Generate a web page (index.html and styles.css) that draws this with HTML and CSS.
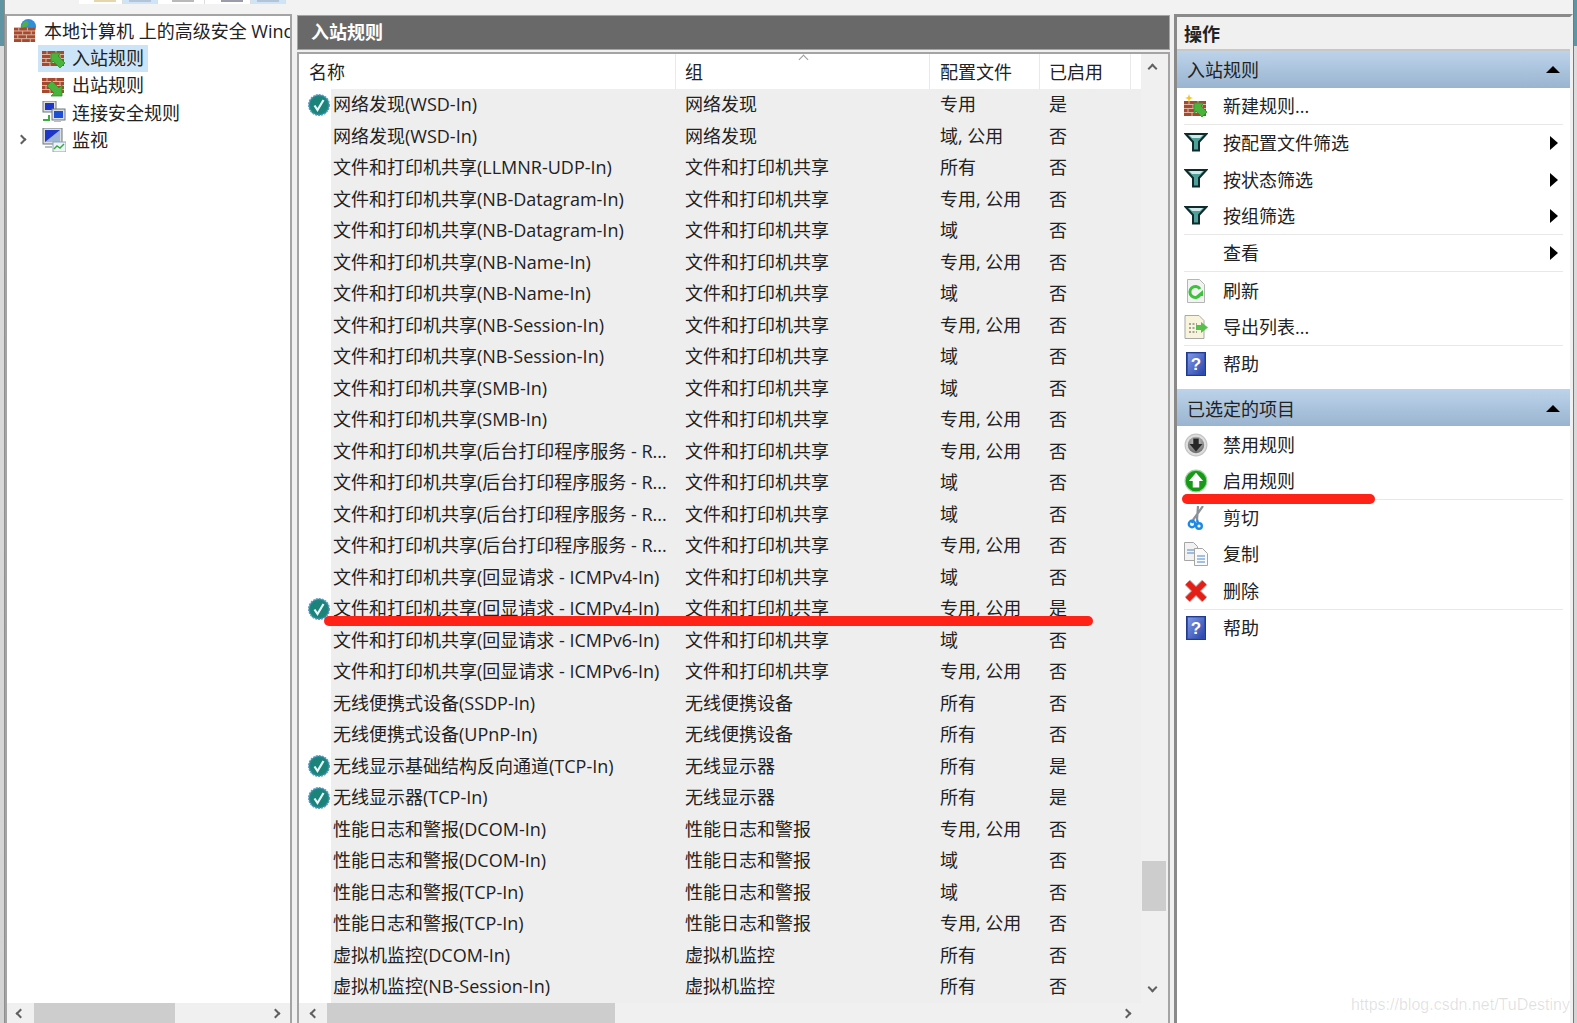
FILE: index.html
```html
<!DOCTYPE html>
<html lang="zh-CN">
<head>
<meta charset="utf-8">
<title>高级安全 Windows 防火墙</title>
<link rel="stylesheet" href="styles.css">
</head>
<body>
<svg class="sprite" xmlns="http://www.w3.org/2000/svg">
  <defs>
    <linearGradient id="g-help" x1="0" y1="0" x2="1" y2="1"><stop offset="0" stop-color="#7f98e6"/><stop offset="1" stop-color="#2b45a8"/></linearGradient>
    <radialGradient id="g-dis" cx=".5" cy=".3" r=".8"><stop offset="0" stop-color="#c9c9c9"/><stop offset="1" stop-color="#5d5d5d"/></radialGradient>
    <g id="bricks">
      <rect x="0" y="5" width="22" height="15" fill="#a8492f"/>
      <path d="M0 8.500h22M0 12.500h22M0 16.500h22M5 5v3.500M14 5v3.500M9 8.500v4M18 8.500v4M4 12.500v4M13 12.500v4M8 16.500v3.500M17 16.500v3.500" stroke="#d9b7a5" stroke-width="1" fill="none"/>
    </g>
    <symbol id="i-check" viewBox="0 0 22 22">
      <circle cx="11" cy="11" r="10.300" fill="#1f8a88" stroke="#5f97c7" stroke-width="1.400" stroke-dasharray="2 1"/>
      <circle cx="11" cy="11" r="8.500" fill="#1b8378"/>
      <path d="M6.500 11.500l3 4.500 6-10" stroke="#e9f8ff" stroke-width="2.200" fill="none"/>
    </symbol>
    <symbol id="i-in" viewBox="0 0 24 24">
      <use href="#bricks"/>
      <path d="M9 7h10l-3 3 7 7-5 5-7-7-2 3z" fill="#49b43c" stroke="#2d8f2a" stroke-width=".8"/>
    </symbol>
    <symbol id="i-out" viewBox="0 0 24 24">
      <use href="#bricks"/>
      <path d="M10 8l7 7 3-3v11H9l3-3-7-7z" fill="#49b43c" stroke="#2d8f2a" stroke-width=".8"/>
    </symbol>
    <symbol id="i-new" viewBox="0 0 24 24">
      <use href="#bricks" transform="translate(0 2)"/>
      <path d="M10 9h10l-3 3 6 6-5 5-6-6-2 3z" fill="#49b43c" stroke="#2d8f2a" stroke-width=".8"/>
      <path d="M5 0l1 3 3 1-3 1-1 3-1-3-3-1 3-1z" fill="#f6c61e"/>
    </symbol>
    <symbol id="i-root" viewBox="0 0 24 24">
      <circle cx="15" cy="8" r="8" fill="#2f8fd8"/>
      <path d="M10 3c3-2 6 0 5 3s-5 1-5 4-3 0-2-3zM18 8c2 0 3 2 2 4s-3 1-3-1z" fill="#56ad46"/>
      <g transform="translate(0 4)"><use href="#bricks"/></g>
    </symbol>
    <symbol id="i-sec" viewBox="0 0 24 24">
      <rect x="1" y="0" width="13" height="11" fill="#ddd" stroke="#6d7680"/><rect x="3" y="2" width="9" height="7" fill="#1d35c8"/>
      <rect x="10" y="8" width="13" height="11" fill="#ddd" stroke="#6d7680"/><rect x="12" y="10" width="9" height="7" fill="#1d4ed8"/>
      <path d="M12 19h7v2h-7z" fill="#b9bec4"/><path d="M1 18h5v-4h2v6H1z" fill="#3cae3c"/>
    </symbol>
    <symbol id="i-mon" viewBox="0 0 24 24">
      <rect x="1" y="0" width="19" height="16" fill="#dcdcdc" stroke="#6d7680"/><rect x="3" y="2" width="15" height="12" fill="#1d35c8"/><path d="M3 14l15-12v12z" fill="#9fb7d6"/>
      <rect x="11" y="14" width="13" height="10" fill="#eef3f9" stroke="#8aa1bd"/><path d="M12 21l3-3 3 2 4-4" stroke="#36a83c" stroke-width="1.400" fill="none"/>
      <path d="M3 18h7v2H3z" fill="#b9bec4"/>
    </symbol>
    <symbol id="i-filter" viewBox="0 0 24 20">
      <path d="M1.500 2h21l-7.500 8v8.500H9V10z" fill="#4f9f9b" stroke="#0f2b2b" stroke-width="2"/>
      <path d="M5 3h14l-3 3H8z" fill="#cfe8e8"/>
    </symbol>
    <symbol id="i-refresh" viewBox="0 0 24 24">
      <path d="M3.500 .5h12l5 5v18h-17z" fill="#f3f3f3" stroke="#b5b5b5"/>
      <path d="M16 16a5.500 5.500 0 1 1 0-6" stroke="#3dc23d" stroke-width="3" fill="none"/>
      <path d="M12 17h7v-6z" fill="#3dc23d"/>
    </symbol>
    <symbol id="i-export" viewBox="0 0 24 24">
      <path d="M1 .5h14l5 5v18H1z" fill="#f8f4dc" stroke="#a9a9a9"/>
      <path d="M5 9h8M5 13h6M5 17h8" stroke="#555" stroke-dasharray="2 1.500"/>
      <path d="M12 10h5v-3l7 5.500-7 5.500v-3h-5z" fill="#55c04a"/>
    </symbol>
    <symbol id="i-help" viewBox="0 0 24 24">
      <rect x="2.500" y=".5" width="19" height="23" fill="#2f4fb5" stroke="#1f3a8f"/>
      <rect x="4" y="1.500" width="16" height="21" fill="url(#g-help)"/>
      <text x="12" y="18" class="help-q" text-anchor="middle">?</text>
    </symbol>
    <symbol id="i-dis" viewBox="0 0 22 22">
      <circle cx="11" cy="11" r="10" fill="#dedede" stroke="#c4c4c4"/>
      <circle cx="11" cy="11" r="7.500" fill="url(#g-dis)"/>
      <path d="M8.500 5h5v5h3.500L11 17 5 10h3.500z" fill="#262626"/>
    </symbol>
    <symbol id="i-en" viewBox="0 0 22 22">
      <circle cx="11" cy="11" r="10" fill="#189a18" stroke="#9ad49a"/>
      <path d="M11 3.500l6.500 7.500H14v6H8v-6H4.500z" fill="#fff"/>
    </symbol>
    <symbol id="i-cut" viewBox="0 0 24 24">
      <path d="M19 0L9 14M14 0l-1 14" stroke="#8b9099" stroke-width="2.200" fill="none"/>
      <path d="M9 14l-1 3M13 14l1 3" stroke="#1e88e5" stroke-width="2.400" fill="none"/>
      <circle cx="8" cy="18" r="3.200" fill="none" stroke="#1e88e5" stroke-width="2.400"/>
      <circle cx="15" cy="20" r="2.800" fill="none" stroke="#1e88e5" stroke-width="2.400"/>
    </symbol>
    <symbol id="i-copy" viewBox="0 0 24 24">
      <path d="M.5 .5h9l4 4v14H.5z" fill="#f2f2f2" stroke="#a5a5a5"/>
      <path d="M3 8h7M3 11h7" stroke="#4d86c6"/>
      <path d="M10.500 6.500h8l5 5v12h-13z" fill="#fafafa" stroke="#a5a5a5"/>
      <path d="M13 14h8M13 17h8M13 20h8" stroke="#4d86c6"/>
    </symbol>
    <symbol id="i-del" viewBox="0 0 24 24">
      <path d="M3.500 3.500L20.500 20.500M20.500 3.500L3.500 20.500" stroke="#c9b3b0" stroke-width="7.500" fill="none"/>
      <path d="M3.500 3.500L20.500 20.500M20.500 3.500L3.500 20.500" stroke="#e41f18" stroke-width="5.800" fill="none"/>
    </symbol>
  </defs>
</svg>

<div class="screen">
  <div class="toolbar">
    <span class="tb tb-a"><i class="tb-chip chip-tan"></i></span>
    <span class="tb tb-b"><i class="tb-chip chip-blue"></i></span>
    <span class="tb tb-c"><i class="tb-chip chip-grey"></i></span>
    <span class="tb tb-d"><i class="tb-chip chip-slate"></i></span>
    <span class="tb tb-b"><i class="tb-chip chip-blue"></i></span>
  </div>

  <div class="main">
    <div class="desk desk-left"></div>

    <section class="tree">
      <div class="tree-body">
        <div class="node node-root"><svg class="ico-tree-root"><use href="#i-root"/></svg><span class="node-label">本地计算机 上的高级安全 Wind</span></div>
        <div class="node node-child"><span class="node-sel"><svg class="ico-tree"><use href="#i-in"/></svg><span>入站规则</span></span></div>
        <div class="node node-child"><span class="node-plain"><svg class="ico-tree"><use href="#i-out"/></svg><span>出站规则</span></span></div>
        <div class="node node-child"><span class="node-plain"><svg class="ico-tree"><use href="#i-sec"/></svg><span>连接安全规则</span></span></div>
        <div class="node node-child node-exp"><span class="chev chev-r"></span><span class="node-plain"><svg class="ico-tree"><use href="#i-mon"/></svg><span>监视</span></span></div>
      </div>
      <div class="hscroll tree-hs"><span class="chev chev-l"></span><span class="thumb tree-thumb"></span><span class="chev chev-r"></span></div>
    </section>

    <section class="center">
      <div class="center-title">入站规则</div>
      <div class="panel">
        <div class="panel-body">
          <div class="list">
            <div class="list-head">
              <div class="hcell hname">名称</div>
              <div class="hcell hgroup">组<span class="sortmark"></span></div>
              <div class="hcell hprofile">配置文件</div>
              <div class="hcell">已启用</div>
            </div>
            <div class="rows">
              <div class="row"><svg class="ck"><use href="#i-check"/></svg><span class="c-name">网络发现(WSD-In)</span><span>网络发现</span><span>专用</span><span>是</span></div>
              <div class="row"><i class="nock"></i><span class="c-name">网络发现(WSD-In)</span><span>网络发现</span><span>域, 公用</span><span>否</span></div>
              <div class="row"><i class="nock"></i><span class="c-name">文件和打印机共享(LLMNR-UDP-In)</span><span>文件和打印机共享</span><span>所有</span><span>否</span></div>
              <div class="row"><i class="nock"></i><span class="c-name">文件和打印机共享(NB-Datagram-In)</span><span>文件和打印机共享</span><span>专用, 公用</span><span>否</span></div>
              <div class="row"><i class="nock"></i><span class="c-name">文件和打印机共享(NB-Datagram-In)</span><span>文件和打印机共享</span><span>域</span><span>否</span></div>
              <div class="row"><i class="nock"></i><span class="c-name">文件和打印机共享(NB-Name-In)</span><span>文件和打印机共享</span><span>专用, 公用</span><span>否</span></div>
              <div class="row"><i class="nock"></i><span class="c-name">文件和打印机共享(NB-Name-In)</span><span>文件和打印机共享</span><span>域</span><span>否</span></div>
              <div class="row"><i class="nock"></i><span class="c-name">文件和打印机共享(NB-Session-In)</span><span>文件和打印机共享</span><span>专用, 公用</span><span>否</span></div>
              <div class="row"><i class="nock"></i><span class="c-name">文件和打印机共享(NB-Session-In)</span><span>文件和打印机共享</span><span>域</span><span>否</span></div>
              <div class="row"><i class="nock"></i><span class="c-name">文件和打印机共享(SMB-In)</span><span>文件和打印机共享</span><span>域</span><span>否</span></div>
              <div class="row"><i class="nock"></i><span class="c-name">文件和打印机共享(SMB-In)</span><span>文件和打印机共享</span><span>专用, 公用</span><span>否</span></div>
              <div class="row"><i class="nock"></i><span class="c-name">文件和打印机共享(后台打印程序服务 - R...</span><span>文件和打印机共享</span><span>专用, 公用</span><span>否</span></div>
              <div class="row"><i class="nock"></i><span class="c-name">文件和打印机共享(后台打印程序服务 - R...</span><span>文件和打印机共享</span><span>域</span><span>否</span></div>
              <div class="row"><i class="nock"></i><span class="c-name">文件和打印机共享(后台打印程序服务 - R...</span><span>文件和打印机共享</span><span>域</span><span>否</span></div>
              <div class="row"><i class="nock"></i><span class="c-name">文件和打印机共享(后台打印程序服务 - R...</span><span>文件和打印机共享</span><span>专用, 公用</span><span>否</span></div>
              <div class="row"><i class="nock"></i><span class="c-name">文件和打印机共享(回显请求 - ICMPv4-In)</span><span>文件和打印机共享</span><span>域</span><span>否</span></div>
              <div class="row"><svg class="ck"><use href="#i-check"/></svg><span class="c-name">文件和打印机共享(回显请求 - ICMPv4-In)</span><span>文件和打印机共享</span><span>专用, 公用</span><span>是</span></div>
              <div class="row"><i class="nock"></i><span class="c-name">文件和打印机共享(回显请求 - ICMPv6-In)</span><span>文件和打印机共享</span><span>域</span><span>否</span></div>
              <div class="row"><i class="nock"></i><span class="c-name">文件和打印机共享(回显请求 - ICMPv6-In)</span><span>文件和打印机共享</span><span>专用, 公用</span><span>否</span></div>
              <div class="row"><i class="nock"></i><span class="c-name">无线便携式设备(SSDP-In)</span><span>无线便携设备</span><span>所有</span><span>否</span></div>
              <div class="row"><i class="nock"></i><span class="c-name">无线便携式设备(UPnP-In)</span><span>无线便携设备</span><span>所有</span><span>否</span></div>
              <div class="row"><svg class="ck"><use href="#i-check"/></svg><span class="c-name">无线显示基础结构反向通道(TCP-In)</span><span>无线显示器</span><span>所有</span><span>是</span></div>
              <div class="row"><svg class="ck"><use href="#i-check"/></svg><span class="c-name">无线显示器(TCP-In)</span><span>无线显示器</span><span>所有</span><span>是</span></div>
              <div class="row"><i class="nock"></i><span class="c-name">性能日志和警报(DCOM-In)</span><span>性能日志和警报</span><span>专用, 公用</span><span>否</span></div>
              <div class="row"><i class="nock"></i><span class="c-name">性能日志和警报(DCOM-In)</span><span>性能日志和警报</span><span>域</span><span>否</span></div>
              <div class="row"><i class="nock"></i><span class="c-name">性能日志和警报(TCP-In)</span><span>性能日志和警报</span><span>域</span><span>否</span></div>
              <div class="row"><i class="nock"></i><span class="c-name">性能日志和警报(TCP-In)</span><span>性能日志和警报</span><span>专用, 公用</span><span>否</span></div>
              <div class="row"><i class="nock"></i><span class="c-name">虚拟机监控(DCOM-In)</span><span>虚拟机监控</span><span>所有</span><span>否</span></div>
              <div class="row"><i class="nock"></i><span class="c-name">虚拟机监控(NB-Session-In)</span><span>虚拟机监控</span><span>所有</span><span>否</span></div>
            </div>
          </div>
          <div class="vscroll"><span class="chev chev-u"></span><span class="thumb v-thumb"></span><span class="chev chev-d"></span></div>
        </div>
        <div class="hscroll center-hs"><span class="chev chev-l"></span><span class="thumb center-thumb"></span><span class="chev chev-r"></span></div>
      </div>
    </section>

    <aside class="actions">
      <div class="actions-title">操作</div>
      <div class="sec-head"><span>入站规则</span><i class="tri-up"></i></div>
      <div class="item"><svg class="ico"><use href="#i-new"/></svg><span>新建规则...</span></div>
      <hr class="sep">
      <div class="item"><svg class="ico ico-f"><use href="#i-filter"/></svg><span>按配置文件筛选</span><i class="tri-r"></i></div>
      <div class="item"><svg class="ico ico-f"><use href="#i-filter"/></svg><span>按状态筛选</span><i class="tri-r"></i></div>
      <div class="item"><svg class="ico ico-f"><use href="#i-filter"/></svg><span>按组筛选</span><i class="tri-r"></i></div>
      <hr class="sep">
      <div class="item"><i class="ico"></i><span>查看</span><i class="tri-r"></i></div>
      <hr class="sep">
      <div class="item"><svg class="ico"><use href="#i-refresh"/></svg><span>刷新</span></div>
      <div class="item"><svg class="ico"><use href="#i-export"/></svg><span>导出列表...</span></div>
      <hr class="sep">
      <div class="item"><svg class="ico"><use href="#i-help"/></svg><span>帮助</span></div>
      <div class="sec-head sec-second"><span>已选定的项目</span><i class="tri-up"></i></div>
      <div class="item"><svg class="ico"><use href="#i-dis"/></svg><span>禁用规则</span></div>
      <div class="item"><svg class="ico"><use href="#i-en"/></svg><span>启用规则</span></div>
      <hr class="sep">
      <div class="item"><svg class="ico"><use href="#i-cut"/></svg><span>剪切</span></div>
      <div class="item"><svg class="ico"><use href="#i-copy"/></svg><span>复制</span></div>
      <div class="item"><svg class="ico"><use href="#i-del"/></svg><span>删除</span></div>
      <hr class="sep">
      <div class="item"><svg class="ico"><use href="#i-help"/></svg><span>帮助</span></div>
    </aside>

    <div class="desk desk-right"></div>
  </div>

  <i class="mark mark-row"></i>
  <i class="mark mark-action"></i>
  <span class="watermark">https://blog.csdn.net/TuDestiny</span>
</div>
</body>
</html>
```
FILE: styles.css
```css
* { box-sizing: border-box; }
html, body { margin: 0; padding: 0; }
body {
  width: 1577px; height: 1023px; overflow: hidden;
  background: #f0f0f0; color: #222;
  font-family: "Open Sans", "Noto Sans CJK SC", sans-serif;
  font-size: 18px; line-height: 24px;
}
.sprite { position: absolute; width: 0; height: 0; }
.help-q { font: bold 17px "Liberation Sans", sans-serif; fill: #fff; }
.screen { position: relative; width: 1577px; height: 1023px; overflow: hidden; }

.toolbar { height: 14px; display: flex; padding-left: 79px; background: #f2f2f2; }
.tb { display: flex; justify-content: center; height: 4px; background: #fff; border-right: 1px solid #ddd; }
.tb-a { width: 44px; padding-left: 8px; }
.tb-b { width: 35px; background: #cfe4f7; }
.tb-c { width: 47px; padding-left: 4px; }
.tb-d { width: 46px; padding-left: 8px; }
.tb-chip { display: block; width: 22px; height: 2px; }
.chip-tan { background: #e6d6ae; }
.chip-blue { background: #b4c4d8; }
.chip-grey { background: #b9b9b9; }
.chip-slate { background: #9a9aaa; }

.main { display: flex; height: 1009px; }
.desk { flex: none; background: linear-gradient(#5f95a2 0, #5f95a2 46px, #dcdcdc 46px, #d4d4d4 100%); }
.desk-left { width: 5px; border-right: 1px solid #8f8f8f; margin-top: -14px; height: 1023px; }
.desk-right { width: 4px; border-left: 1px solid #777; margin-top: -14px; height: 1023px; }

/* tree */
.tree {
  width: 287px; flex: none; display: flex; flex-direction: column;
  background: #fff; border: 1px solid #a4a4a4; border-width: 2px 2px 0 2px;
}
.tree-body { flex: 1; padding-top: 1px; overflow: hidden; }
.node { height: 27.3px; display: flex; align-items: center; white-space: nowrap; overflow: hidden; }
.node-root { padding-left: 7px; height: 27.5px; }
.node-label { margin-left: 7px; }
.ico-tree-root { width: 23px; height: 23px; flex: none; }
.node-child { padding-left: 31px; }
.node-sel, .node-plain { display: flex; align-items: center; height: 27px; padding: 0 4px 0 4px; gap: 6px; }
.node-sel { background: #cce4f8; }
.ico-tree { width: 24px; height: 24px; flex: none; }
.node-exp { position: relative; }
.node-exp .chev { position: absolute; left: 11px; top: 10px; }

.chev { display: block; width: 7px; height: 7px; border: solid #606060; border-width: 2px 2px 0 0; flex: none; }
.chev-r { transform: rotate(45deg); }
.chev-l { transform: rotate(-135deg); }
.chev-u { transform: rotate(-45deg); }
.chev-d { transform: rotate(135deg); }

.hscroll { height: 20px; flex: none; display: flex; align-items: center; background: #f0f0f0; }
.thumb { display: block; background: #cdcdcd; }
.tree-hs { padding: 0 11px 0 10px; }
.tree-hs .thumb { width: 141px; height: 20px; margin-left: 10px; margin-right: auto; }
.center-hs { padding-left: 12px; padding-right: 38px; }
.center-hs .thumb { width: 288px; height: 20px; margin-left: 9px; margin-right: auto; }

/* centre */
.center { width: 873px; flex: none; margin-left: 5px; display: flex; flex-direction: column; }
.center-title {
  height: 35px; flex: none; padding-left: 13px; margin-top: 1px;
  background: #696969; color: #fff; font-weight: 700; line-height: 33px;
  border: 1px solid #a4a4a4;
}
.panel { flex: 1; margin-top: 2px; display: flex; flex-direction: column; background: #fff; border: 1px solid #a4a4a4; border-width: 2px 2px 0 2px; min-height: 0; }
.panel-body { flex: 1; display: flex; min-height: 0; }
.list { width: 842px; flex: none; display: flex; flex-direction: column; }
.list-head { height: 35px; flex: none; display: grid; grid-template-columns: 377px 254px 110px 91px; }
.hcell { padding-left: 9px; line-height: 36px; border-right: 1px solid #e9e9e9; position: relative; }
.hname { padding-left: 10px; }
.hprofile { padding-left: 10px; }
.sortmark { position: absolute; left: 124px; top: 2px; width: 7px; height: 7px; border: solid #9a9a9a; border-width: 1px 0 0 1px; transform: rotate(45deg); }
.rows { flex: 1; display: grid; grid-auto-rows: 31.5px; }
.row { display: grid; grid-template-columns: 32px 354px 254px 110px 92px; align-items: center; position: relative; white-space: nowrap; }
.row > span { height: 31.5px; line-height: 31px; background: #eeeeee; overflow: hidden; }
.row > .c-name { padding-left: 2px; }
.row > span:nth-of-type(3) { padding-left: 1px; }
.ck { width: 22px; height: 22px; margin-left: 9px; }
.nock { display: block; }
.vscroll { flex: 1; display: flex; flex-direction: column; align-items: center; background: #f0f0f0; position: relative; padding-right: 4px; }
.vscroll .chev-u { margin-top: 11px; }
.vscroll .thumb { position: absolute; left: 1px; right: 2px; top: 807px; height: 50px; }
.vscroll .chev-d { margin-top: auto; margin-bottom: 12px; }

/* actions */
.actions { flex: 1; margin-left: 4px; padding: 0; background: #fff; border: solid #8a8a8a; border-width: 3px 3px 0 3px; border-right-color: #f0f0f0; overflow: hidden; }
.actions-title { padding-left: 7px; background: #f0f0f0; font-weight: 700; line-height: 34px; border-bottom: 2px solid #c8c8c8; height: 34px; }
.sec-head { height: 37px; display: flex; align-items: center; justify-content: space-between; padding: 0 10px 0 10px; background: linear-gradient(#bcd3ea, #9ab4d0); }
.sec-second { margin-top: 7px; padding-top: 2px; }
.tri-up { width: 0; height: 0; border: solid transparent; border-width: 0 7px 7px 7px; border-bottom-color: #000; }
.item { height: 36.3px; display: flex; align-items: center; padding-left: 7px; }
.ico { width: 24px; height: 24px; flex: none; margin-right: 15px; display: block; }
.ico-f { height: 20px; margin-bottom: 3px; }
.tri-r { margin-left: auto; margin-right: 12px; width: 0; height: 0; border: solid transparent; border-width: 7px 0 7px 8px; border-left-color: #000; }
.sep { height: 1px; margin: 0 7px; border: 0; background: #e8e8e8; }

/* annotations on top of the screenshot */
.mark { position: absolute; display: block; background: #ff2216; border-radius: 5px; }
.mark-row { left: 324px; top: 616px; width: 769px; height: 10px; }
.mark-action { left: 1182px; top: 494px; width: 193px; height: 10px; }
.watermark { position: absolute; right: 7px; top: 996px; font: 16px "Liberation Sans", sans-serif; color: rgba(0, 0, 0, .12); }
```
